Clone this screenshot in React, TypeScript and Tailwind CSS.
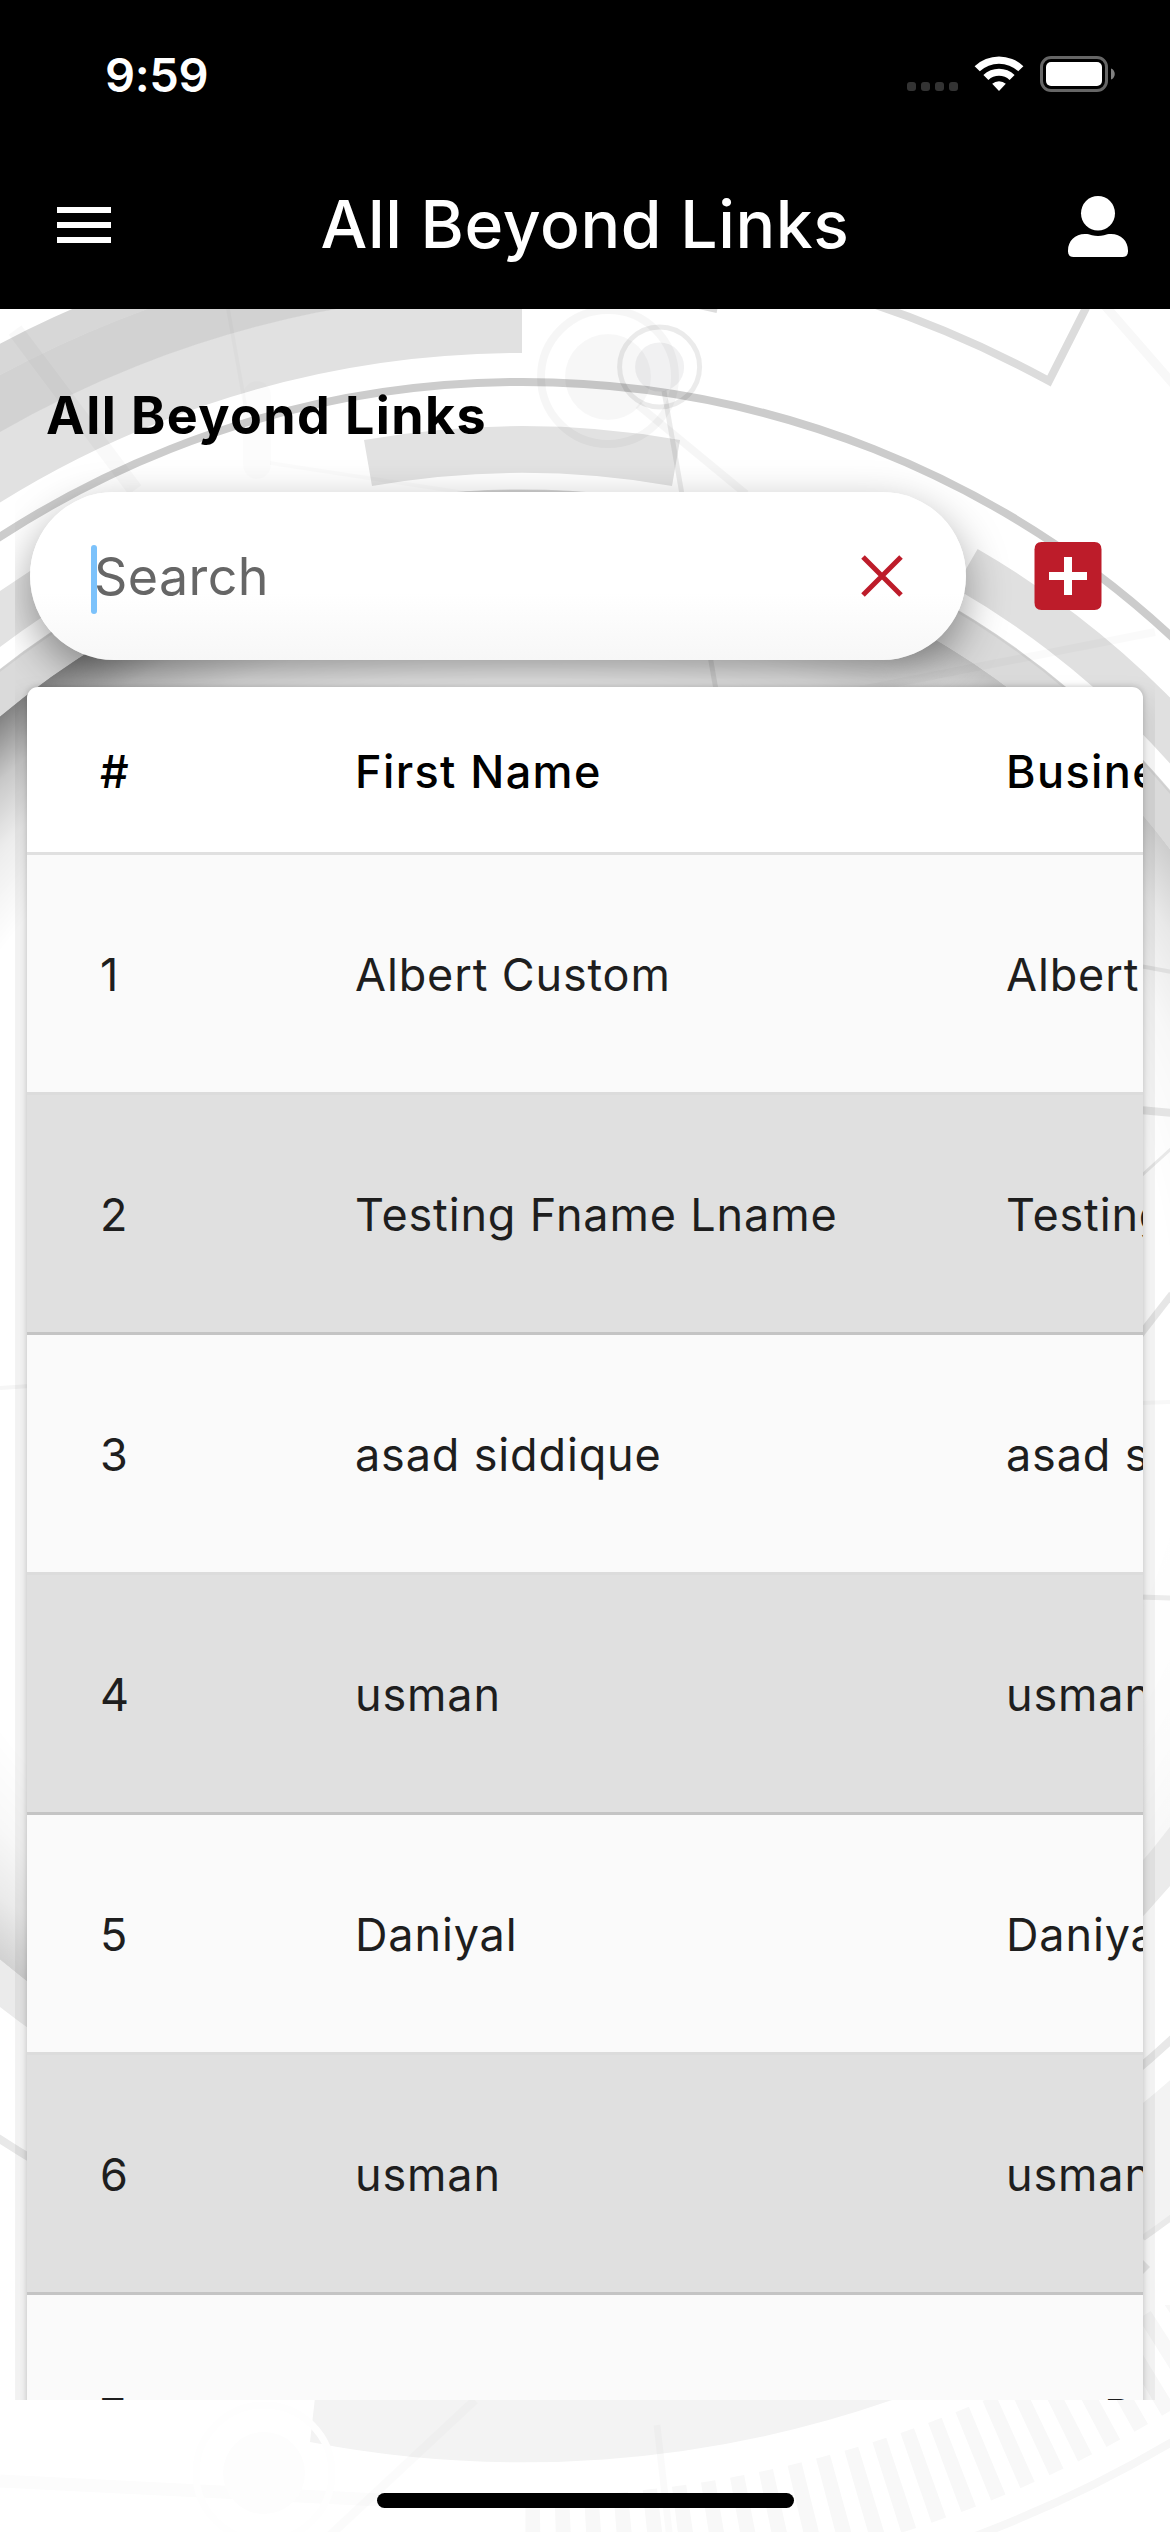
import React from "react";

const rows = [
  { id: "1", first: "Albert Custom", business: "Albert Custom" },
  { id: "2", first: "Testing Fname Lname", business: "Testing Fname" },
  { id: "3", first: "asad siddique", business: "asad siddique" },
  { id: "4", first: "usman", business: "usman" },
  { id: "5", first: "Daniyal", business: "Daniyal" },
  { id: "6", first: "usman", business: "usman" },
  { id: "7", first: "", business: "" },
];

function Backdrop() {
  return (
    <svg className="absolute inset-0" width="1170" height="2532" viewBox="0 0 1170 2532" fill="none">
      <defs>
        <radialGradient id="disk" gradientUnits="userSpaceOnUse" cx="522" cy="1338" r="812">
          <stop offset="0.8" stopColor="#000" stopOpacity="0" />
          <stop offset="0.88" stopColor="#000" stopOpacity="0.14" />
          <stop offset="0.94" stopColor="#000" stopOpacity="0.4" />
          <stop offset="1" stopColor="#000" stopOpacity="0.9" />
        </radialGradient>
        <linearGradient id="fade" gradientUnits="userSpaceOnUse" x1="0" y1="700" x2="1000" y2="1100">
          <stop offset="0" stopColor="#fff" stopOpacity="0.55" />
          <stop offset="1" stopColor="#fff" stopOpacity="0.22" />
        </linearGradient>
        <linearGradient id="fadeLow" gradientUnits="userSpaceOnUse" x1="0" y1="0" x2="1170" y2="0">
          <stop offset="0" stopColor="#fff" stopOpacity="0.2" />
          <stop offset="1" stopColor="#fff" stopOpacity="0.03" />
        </linearGradient>
        <mask id="diskMask" maskUnits="userSpaceOnUse" x="-300" y="500" width="1700" height="1700">
          <rect x="-300" y="500" width="1700" height="880" fill="url(#fade)" />
          <rect x="-300" y="1380" width="1700" height="900" fill="url(#fadeLow)" />
        </mask>
        <clipPath id="top"><rect width="1170" height="1338" /></clipPath>
        <clipPath id="bottom"><rect y="1338" width="1170" height="1194" /></clipPath>
        <clipPath id="topLeft"><rect width="522" height="1338" /></clipPath>
        <clipPath id="bottomRight"><rect x="522" y="2305" width="648" height="227" /></clipPath>
      </defs>
      <rect width="1170" height="2532" fill="#fff" />
      <circle cx="522" cy="1338" r="812" fill="url(#disk)" mask="url(#diskMask)" />
      <g clipPath="url(#top)">
        <circle cx="522" cy="1338" r="830" stroke="#dadada" strokeWidth="37" />
        <circle cx="522" cy="1338" r="847" stroke="#d0d0d0" strokeWidth="2" />
        <circle cx="522" cy="1338" r="956" stroke="#cccccc" strokeWidth="8" />
        <path d="M977.6 549A911 911 0 0 1 1433 1338L1388 1338A866 866 0 0 0 955 588Z" fill="#e0e0e0" />
      </g>
      <g clipPath="url(#topLeft)">
        <path d="M-389 1338A911 911 0 0 1 66 549L89 588A866 866 0 0 0 -344 1338Z" fill="#e2e2e2" />
        <circle cx="522" cy="1338" r="1015.5" stroke="#e1e1e1" strokeWidth="61" />
        <circle cx="522" cy="1338" r="1070.5" stroke="#d2d2d2" strokeWidth="50" />
        <circle cx="522" cy="1338" r="1109" stroke="#d7d7d7" strokeWidth="28" />
      </g>
      <path d="M364 440A912 912 0 0 1 680 440L672 486A865 865 0 0 0 372 486Z" fill="#e2e2e2" />
      <g clipPath="url(#bottom)">
        <circle cx="522" cy="1338" r="830" stroke="#ebebeb" strokeWidth="37" />
        <circle cx="522" cy="1338" r="956" stroke="#e8e8e8" strokeWidth="8" />
        <path d="M1507 1338A985 985 0 0 1 1143 2103L1143 2240A1095 1095 0 0 0 1617 1338Z" fill="#f3f3f3" />
        <path d="M317 2380L310 2442A1124 1124 0 0 0 892 2400L920 2380Z" fill="#f3f3f3" />
      </g>
      <path d="M1143 2238A1095 1095 0 0 0 1180 2211" stroke="#eaeaea" strokeWidth="6" />
      <path d="M1141 2258L1150 2267L1141 2276Z" fill="#e9e9e9" />
      <g clipPath="url(#bottomRight)">
        <circle cx="522" cy="1338" r="1206" stroke="#f8f8f8" strokeWidth="95" strokeDasharray="15 15.6" transform="rotate(90 522 1338)" />
        <circle cx="522" cy="1338" r="1281" stroke="#f7f7f7" strokeWidth="8" />
      </g>

      <path d="M15 330L135 490" stroke="#000" strokeOpacity="0.025" strokeWidth="16" />
      <path d="M228 309L246 410" stroke="#000" strokeOpacity="0.02" strokeWidth="4" />
      <path d="M257 395L257 465" stroke="#000" strokeOpacity="0.01" strokeWidth="28" strokeLinecap="round" />
      <path d="M270 463L590 512" stroke="#000" strokeOpacity="0.015" strokeWidth="4" />
      <circle cx="608" cy="377" r="43" fill="#000" fillOpacity="0.03" />
      <circle cx="608" cy="377" r="67" stroke="#000" strokeOpacity="0.035" strokeWidth="8" />
      <circle cx="659.6" cy="367" r="24.5" fill="#101020" fillOpacity="0.06" />
      <circle cx="659.6" cy="367" r="40" stroke="#000" strokeOpacity="0.08" strokeWidth="5" />
      <path d="M664 391L716 690" stroke="#000" strokeOpacity="0.08" strokeWidth="5" />
      <path d="M638 405L746 494" stroke="#000" strokeOpacity="0.035" strokeWidth="8" />
      <path d="M690 305L717 311" stroke="#dcdcdc" strokeWidth="4" />
      <path d="M870 303A1091 1091 0 0 1 1049 381L1090 300" stroke="#dcdcdc" strokeWidth="8" />
      <path d="M1100 300L1175 386" stroke="#f8f8f8" strokeWidth="9" />
      <path d="M860 690L1155 632" stroke="#000" strokeOpacity="0.02" strokeWidth="8" />

      <path d="M1140 966L1172 972" stroke="#dfdfdf" strokeWidth="4" />
      <path d="M1140 1110L1172 1113" stroke="#e4e4e4" strokeWidth="8" />
      <path d="M1140 1177L1172 1148" stroke="#e8e8e8" strokeWidth="3" />
      <path d="M1140 1335L1172 1294" stroke="#e6e6e6" strokeWidth="7" />
      <path d="M1140 1403L1172 1402" stroke="#f8f8f8" strokeWidth="4" />
      <path d="M1140 1597L1172 1598" stroke="#ececec" strokeWidth="5" />
      <path d="M0 1388L30 1386" stroke="#f6f6f6" strokeWidth="4" />
      <path d="M0 2481L380 2500" stroke="#fcfcfc" strokeWidth="13" />
      <path d="M475 2400L325 2540" stroke="#000" strokeOpacity="0.014" strokeWidth="9" />
      <path d="M657 2425L670 2540" stroke="#000" strokeOpacity="0.02" strokeWidth="7" />
      <circle cx="264" cy="2473" r="41" fill="#fdfdfd" />
      <circle cx="264" cy="2473" r="68" stroke="#fefefe" strokeWidth="7" />
    </svg>
  );
}

function StatusBar() {
  return (
    <div className="flex h-[141px] items-start justify-between pl-[105px] pr-[54px] pt-[45px]">
      <span className="text-[47px] font-semibold leading-[60px] tracking-[-0.4px] text-white">9:59</span>
      <svg className="mt-[7px]" width="210" height="44" viewBox="906 52 210 44">
        <g fill="#333">
          <rect x="907" y="82" width="9" height="9" rx="3" />
          <rect x="921" y="82" width="9" height="9" rx="3" />
          <rect x="935" y="82" width="9" height="9" rx="3" />
          <rect x="949" y="82" width="9" height="9" rx="3" />
        </g>
        <g fill="#fff">
          <path d="M974.6 66.2A35.5 35.5 0 0 1 1023.4 66.2L1018.2 71.2A28.3 28.3 0 0 0 979.8 71.2Z" />
          <path d="M983.4 75A22.5 22.5 0 0 1 1014.6 75L1009.6 80A15.5 15.5 0 0 0 988.4 80Z" />
          <path d="M992.2 83.8A10 10 0 0 1 1005.8 83.8L999 91Z" />
          <rect x="1046" y="62" width="56" height="24" rx="5" />
        </g>
        <rect x="1041.5" y="57.5" width="65" height="33" rx="9.5" fill="none" stroke="#666" strokeWidth="3" />
        <path d="M1111 68.500C1116 70 1116 78 1111 79.500Z" fill="#808080" />
      </svg>
    </div>
  );
}

function AppBar() {
  return (
    <div className="grid h-[168px] grid-cols-[180px_1fr_180px] items-start pt-[35px]">
      <div className="flex flex-col gap-[9px] pl-[57px] pt-[31px]">
        <i className="block h-[6px] w-[54px] bg-white" />
        <i className="block h-[6px] w-[54px] bg-white" />
        <i className="block h-[6px] w-[54px] bg-white" />
      </div>
      <h1 className="whitespace-nowrap pt-[8px] text-center text-[66px] font-medium leading-[80px] tracking-[0.6px] text-white">
        All Beyond Links
      </h1>
      <svg className="ml-[78px] mt-[20px]" width="60" height="62" viewBox="0 0 60 62" fill="#fff">
        <ellipse cx="30" cy="17.300" rx="17" ry="17.300" />
        <path d="M17 38C20 38 21.500 38.300 24 39.200Q30 40.800 36 39.200C38.500 38.300 40 38 43 38C53 38 60 45 60 54.500V55.500Q60 61 54.500 61H5.500Q0 61 0 55.500V54.500C0 45 7 38 17 38Z" />
      </svg>
    </div>
  );
}

function SearchRow() {
  return (
    <div className="flex items-center pl-[15px]">
      <div className="flex h-[168px] w-[936px] items-center rounded-full bg-linear-to-b from-white from-60% to-[#f7f7f7] pl-[61px] pr-[63px] shadow-[0_16px_44px_rgba(0,0,0,0.38)]">
        <i className="mt-[7px] h-[69px] w-[6px] rounded-full bg-[#7cc2fb]" />
        <span className="-ml-[3px] flex-1 pt-[2px] text-[52px] leading-[70px] text-[#666] tracking-[0.4px]">Search</span>
        <svg width="42" height="42" viewBox="0 0 42 42" stroke="#bd1c2a" strokeWidth="5">
          <path d="M2 2L40 40M40 2L2 40" />
        </svg>
      </div>
      <svg className="ml-[68px]" width="68" height="68" viewBox="0 0 68 68">
        <path fill="#bd1c2a" d="M7.500 0H60.500Q67.500 0 67.500 7.500V60.500Q67.500 68 60.500 68H7.500Q0.500 68 0.500 60.500V7.500Q0.500 0 7.500 0Z" />
        <path fill="#fff" d="M30 15H38V30H53V38H38V53H30V38H15V30H30Z" />
      </svg>
    </div>
  );
}

const columns = "grid w-[1600px] grid-cols-[255px_651px_1fr] items-center pl-[73px] text-[45px] ";

function LinksTable() {
  return (
    <div className="relative mx-[12px] mt-[27px] h-[1800px] overflow-hidden rounded-t-[11px] bg-white shadow-[0_0_6px_rgba(0,0,0,0.22),0_30px_24px_24px_rgba(0,0,0,0.06)]">
      <div className={columns + "h-[168px] border-b-[3px] border-[#e0e0e0] pt-[4px] font-medium text-black tracking-[1.4px]"}>
        <span>#</span>
        <span>First Name</span>
        <span>Business Name</span>
      </div>
      {rows.map((r, i) => (
        <div
          key={r.id}
          className={
            columns +
            "h-[240px] border-b-[3px] pt-[3px] text-[#1e1e1e] tracking-[0.85px] " +
            (i % 2 ? "border-[#c4c4c4] bg-[#e0e0e0]" : "border-[#dcdcdc] bg-[#fafafa]")
          }
        >
          <span>{r.id}</span>
          <span>{r.first}</span>
          {r.business ? <span>{r.business}</span> : <span className="pl-[98px] pt-[2px]">D</span>}
        </div>
      ))}
    </div>
  );
}

export default function App() {
  return (
    <div className="relative h-[2532px] w-[1170px] overflow-hidden bg-white font-['Inter',sans-serif]">
      <Backdrop />
      <div className="relative flex h-full flex-col">
        <header className="h-[309px] bg-black">
          <StatusBar />
          <AppBar />
        </header>
        <main className="mx-[15px] h-[2091px] overflow-hidden">
          <h2 className="pb-[44px] pl-[31px] pt-[75px] text-[52px] font-bold leading-[64px] tracking-[1.4px] text-black">
            All Beyond Links
          </h2>
          <SearchRow />
          <LinksTable />
        </main>
        <footer className="flex flex-1 justify-center pt-[93px]">
          <div className="h-[15px] w-[417px] rounded-full bg-black" />
        </footer>
      </div>
    </div>
  );
}
